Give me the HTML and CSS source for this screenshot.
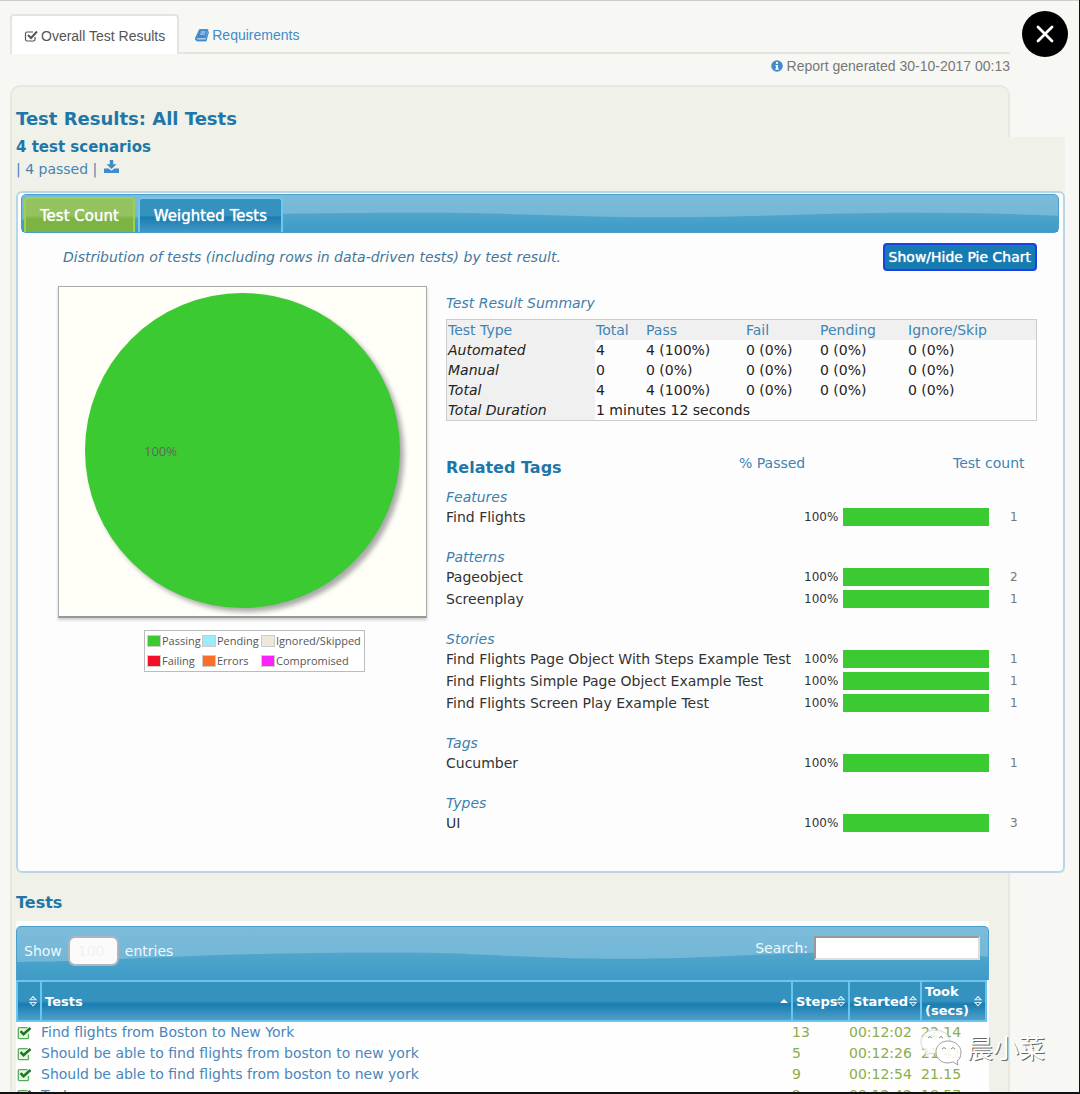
FILE: index.html
```html
<!DOCTYPE html>
<html lang="en">
<head>
<meta charset="utf-8">
<title>Test Results: All Tests</title>
<link rel="stylesheet" href="styles.css">
</head>
<body>
<svg class="sprite" aria-hidden="true">
  <linearGradient id="deep" x1="0" y1="0" x2="0" y2="1"><stop offset="0" stop-color="#53a5cb"/><stop offset=".6" stop-color="#42a0c8"/><stop offset="1" stop-color="#4399c6"/></linearGradient>
  <symbol id="passed" viewBox="0 0 15 15">
    <path d="M11.500 9v3.500q0 1.200-1.200 1.200H2.500q-1.200 0-1.200-1.200V3.800q0-1.200 1.200-1.200h8" fill="#e6f5e4" stroke="#58ab58" stroke-width="1.300"/>
    <path d="M3.500 6.200l3 3L13.500 3" fill="none" stroke="#1d7a20" stroke-width="2.600"/>
  </symbol>
  <symbol id="sort" viewBox="0 0 8 12">
    <path d="M1 4.800L4 1.500l3 3.300zM1 7.500L4 10.800l3-3.300z" fill="none" stroke="#d8effa" stroke-width="1.100"/>
  </symbol>
  <symbol id="wave" viewBox="0 0 1000 50" preserveAspectRatio="none">
    <path d="M0 33C90 33 180 24 390 24c90 0 130 6 230 6 100 0 150-6 240-6q80 0 140 4v22H0z" fill="url(#deep)"/>
  </symbol>
</svg>
<div class="viewer">
  <button class="close" type="button" aria-label="Close">
    <svg viewBox="0 0 18 18" width="18" height="18"><path d="M2 2l14 14M16 2L2 16" stroke="#fff" stroke-width="2.800" stroke-linecap="round"/></svg>
  </button>
  <div class="page">
    <nav class="tabs">
      <a class="tab active" href="#results"><svg viewBox="0 0 14 14" width="14" height="14"><path d="M11 8v2.500q0 1.500-1.500 1.500H3q-1.500 0-1.500-1.500v-6Q1.500 3 3 3h6" fill="none" stroke="#555" stroke-width="1.200"/><path d="M4 6l3 3L13 2.500" fill="none" stroke="#555" stroke-width="2"/></svg>Overall Test Results</a>
      <a class="tab" href="#requirements"><svg viewBox="0 0 14 14" width="14" height="14"><path d="M4.500 1.500h8.500l-2.500 8.500H2q-.8 1.200.4 1.800h8.300L13.600 3.500l-2.500 9.500H2Q0 12.500.5 10z" fill="#428bca" stroke="#428bca" stroke-width=".8"/><path d="M5.800 4h4.700M5.200 6h4.700" stroke="#cfe2f3"/></svg>Requirements</a>
    </nav>
    <p class="generated"><svg viewBox="0 0 12 12" width="12" height="12"><circle cx="6" cy="6" r="5.800" fill="#428bca"/><path d="M5 2h2v1.800H5zM4.500 5H7v3.500h.8v1.300H4.300V8.500H5V6.200h-.5z" fill="#fff"/></svg>Report generated 30-10-2017 00:13</p>

    <main class="content" id="results">
      <h1>Test Results: All Tests</h1>
      <div class="results">
        <h2>4 test scenarios</h2>
        <p class="counts">| 4 passed | <a href="#download" aria-label="Download"><svg viewBox="0 0 15 14" width="15" height="14"><path d="M5.800 0h3.400v4.300h3.300L7.500 9 2.500 4.300h3.300z" fill="#428bca"/><path d="M0 8.500h4.500l3 2.200 3-2.200H15v4.500H0z" fill="#428bca"/></svg></a></p>

        <section class="panel">
          <div class="bar">
            <svg class="wave" aria-hidden="true"><use href="#wave"/></svg>
            <a class="bar-tab on" href="#count">Test Count</a>
            <a class="bar-tab" href="#weighted">Weighted Tests</a>
          </div>
          <div class="intro">
            <p>Distribution of tests (including rows in data-driven tests) by test result.</p>
            <button class="toggle" type="button">Show/Hide Pie Chart</button>
          </div>
          <div class="columns">
            <div class="chart">
              <div class="plot"><div class="pie"><span>100%</span></div></div>
              <ul class="legend">
                <li><i class="key passing"></i>Passing</li><li><i class="key pending"></i>Pending</li><li><i class="key ignored"></i>Ignored/Skipped</li>
                <li><i class="key failing"></i>Failing</li><li><i class="key errors"></i>Errors</li><li><i class="key compromised"></i>Compromised</li>
              </ul>
            </div>
            <div class="details">
              <h4>Test Result Summary</h4>
              <table class="summary">
                <colgroup><col class="c-type"><col class="c-total"><col class="c-pass"><col class="c-fail"><col class="c-pending"><col></colgroup>
                <thead><tr><th>Test Type</th><th>Total</th><th>Pass</th><th>Fail</th><th>Pending</th><th>Ignore/Skip</th></tr></thead>
                <tbody>
                  <tr><th>Automated</th><td>4</td><td>4 (100%)</td><td>0 (0%)</td><td>0 (0%)</td><td>0 (0%)</td></tr>
                  <tr><th>Manual</th><td>0</td><td>0 (0%)</td><td>0 (0%)</td><td>0 (0%)</td><td>0 (0%)</td></tr>
                  <tr><th>Total</th><td>4</td><td>4 (100%)</td><td>0 (0%)</td><td>0 (0%)</td><td>0 (0%)</td></tr>
                  <tr><th>Total Duration</th><td colspan="5">1 minutes 12 seconds</td></tr>
                </tbody>
              </table>
              <div class="tags-head"><h3>Related Tags</h3><span>% Passed</span><span>Test count</span></div>
              <section class="group"><h4>Features</h4>
                <div class="tag"><a href="#t1">Find Flights</a><span class="pct">100%</span><span class="meter"></span><span class="num">1</span></div>
              </section>
              <section class="group"><h4>Patterns</h4>
                <div class="tag"><a href="#t2">Pageobject</a><span class="pct">100%</span><span class="meter"></span><span class="num">2</span></div>
                <div class="tag"><a href="#t3">Screenplay</a><span class="pct">100%</span><span class="meter"></span><span class="num">1</span></div>
              </section>
              <section class="group"><h4>Stories</h4>
                <div class="tag"><a href="#t4">Find Flights Page Object With Steps Example Test</a><span class="pct">100%</span><span class="meter"></span><span class="num">1</span></div>
                <div class="tag"><a href="#t5">Find Flights Simple Page Object Example Test</a><span class="pct">100%</span><span class="meter"></span><span class="num">1</span></div>
                <div class="tag"><a href="#t6">Find Flights Screen Play Example Test</a><span class="pct">100%</span><span class="meter"></span><span class="num">1</span></div>
              </section>
              <section class="group"><h4>Tags</h4>
                <div class="tag"><a href="#t7">Cucumber</a><span class="pct">100%</span><span class="meter"></span><span class="num">1</span></div>
              </section>
              <section class="group"><h4>Types</h4>
                <div class="tag"><a href="#t8">UI</a><span class="pct">100%</span><span class="meter"></span><span class="num">3</span></div>
              </section>
            </div>
          </div>
        </section>
      </div>

      <h3 class="tests-title">Tests</h3>
      <div class="tests">
        <div class="controls">
          <svg class="wave" aria-hidden="true"><use href="#wave"/></svg>
          <label>Show <select><option>100</option></select> entries</label>
          <label class="search">Search: <input type="search"></label>
        </div>
        <table class="list">
          <colgroup><col class="l-icon"><col><col class="l-steps"><col class="l-started"><col class="l-took"></colgroup>
          <thead><tr>
            <th><div class="head end"><svg width="8" height="12"><use href="#sort"/></svg></div></th>
            <th><div class="head">Tests<svg viewBox="0 0 8 12" width="8" height="12"><path d="M0 8l4-4 4 4z" fill="#fff"/></svg></div></th>
            <th><div class="head">Steps<svg width="8" height="12"><use href="#sort"/></svg></div></th>
            <th><div class="head">Started<svg width="8" height="12"><use href="#sort"/></svg></div></th>
            <th><div class="head">Took (secs)<svg width="8" height="12"><use href="#sort"/></svg></div></th>
          </tr></thead>
          <tbody>
            <tr><td><svg width="15" height="15"><use href="#passed"/></svg></td><td><a href="#s1">Find flights from Boston to New York</a></td><td>13</td><td>00:12:02</td><td>22.14</td></tr>
            <tr><td><svg width="15" height="15"><use href="#passed"/></svg></td><td><a href="#s2">Should be able to find flights from boston to new york</a></td><td>5</td><td>00:12:26</td><td>21.41</td></tr>
            <tr><td><svg width="15" height="15"><use href="#passed"/></svg></td><td><a href="#s3">Should be able to find flights from boston to new york</a></td><td>9</td><td>00:12:54</td><td>21.15</td></tr>
            <tr><td><svg width="15" height="15"><use href="#passed"/></svg></td><td><a href="#s4">Test</a></td><td>9</td><td>00:12:42</td><td>18.57</td></tr>
          </tbody>
        </table>
      </div>
    </main>
  </div>
  <div class="watermark">
    <svg viewBox="0 0 44 38" width="44" height="38"><path d="M16 2C8 2 2 7 2 14c0 4 2 7 5 9l-1 5 5-3 6 1C26 26 31 21 31 14S24 2 16 2z" fill="#fff" fill-opacity=".85" stroke="#bbb" stroke-width=".6"/><path d="M29 13c-7 0-12 5-12 11s5 11 12 11l5-1 5 3-1-4c3-2 4-5 4-9 0-6-6-11-13-11z" fill="#fff" fill-opacity=".9" stroke="#888" stroke-width=".8"/><path d="M9 10q2-3 4 0M20 10q2-3 4 0M23 21q2-3 4 0M32 21q2-3 4 0" fill="none" stroke="#888"/></svg>
    <span>晨小菜</span>
  </div>
</div>
</body>
</html>
```
FILE: styles.css
```css
* { box-sizing: border-box; }
body {
  margin: 0;
  font: 14px/20px "DejaVu Sans", Verdana, sans-serif;
  color: #333;
}
h1, h2, h3, h4, p, ul { margin: 0; padding: 0; }
a { color: inherit; text-decoration: none; }
.sprite { position: absolute; width: 0; height: 0; }

.viewer {
  position: relative;
  height: 100vh;
  overflow: hidden;
  background: #f7f8f3;
  border: solid #111;
  border-width: 0 1px 2px 0;
  box-shadow: inset 0 1px #ccc;
}
.close {
  position: absolute;
  top: 11px;
  right: 11px;
  width: 46px;
  height: 46px;
  display: grid;
  place-items: center;
  padding: 0;
  border: 0;
  border-radius: 50%;
  background: #000;
}
.page { padding: 14px 69px 0 10px; }

.tabs { display: flex; height: 40px; border-bottom: 2px solid #e3e5de; }
.tab {
  display: flex;
  align-items: center;
  gap: 3px;
  height: 42px;
  padding: 0 16px;
  font: 14px/20px "Liberation Sans", Arial, sans-serif;
  color: #428bca;
}
.tab.active {
  height: 40px;
  padding: 2px 12px 0 12px;
  color: #555;
  background: #fff;
  border: 2px solid #e3e5de;
  border-bottom: 0;
  border-radius: 4px 4px 0 0;
}
.generated {
  display: flex;
  justify-content: flex-end;
  align-items: center;
  gap: 4px;
  height: 31px;
  padding-bottom: 7px;
  font: 14px/20px "Liberation Sans", Arial, sans-serif;
  color: #777;
}

.content {
  padding: 20px 0 0 4px;
  background: #f0f1e9;
  border: 2px solid #e6e8e1;
  border-radius: 10px;
}
h1 { font-size: 18px; line-height: 24px; padding-bottom: 6px; color: #1f76a8; }
h2 { font-size: 15px; line-height: 20px; color: #1f76a8; }
h3 { font-size: 16px; line-height: 20px; color: #1f76a8; }
h4 { font-size: 14px; line-height: 18px; font-weight: 400; font-style: italic; color: #3f7fab; }
.results { margin-right: -57px; background: #f0f1e9; }
.counts { line-height: 24px; padding-bottom: 10px; color: #4684b5; }
.counts a { margin-left: 2px; }

.panel {
  padding: 1px 4px 27px 3px;
  background: #fdfdfd;
  border: 2px solid #b9d6e9;
  border-radius: 6px;
}
.bar, .controls {
  position: relative;
  display: flex;
  background: linear-gradient(#7cbcda, #6db3d5);
  border: 1px solid #4b9fce;
}
.bar { height: 39px; gap: 3px; padding: 2px 2px 0; border-radius: 5px; align-items: stretch; }
.wave { position: absolute; inset: 0; width: 100%; height: 100%; }
.bar-tab {
  position: relative;
  padding: 0 14px;
  font-size: 15px;
  line-height: 34px;
  color: #fff;
  text-shadow: 0 0 1px #fff;
  border: 2px solid #75c4ec;
  border-bottom: 0;
  border-radius: 4px 4px 0 0;
  background: linear-gradient(#3592bf 0 50%, #1a7cb0 55%, #4199c5);
}
.bar-tab.on { border-color: #9bd052; background: linear-gradient(#93c25f 0 50%, #7cb342 60%); }

.intro { display: flex; justify-content: space-between; align-items: center; padding: 10px 22px 0 42px; }
.intro p { font-style: italic; color: #44789c; }
.toggle {
  height: 28px;
  padding: 0 4px;
  font: 14px/20px "DejaVu Sans", Verdana, sans-serif;
  color: #fff;
  text-shadow: 0 0 1px #fff;
  background: #167bb0;
  border: 2px solid #1c40e8;
  border-radius: 4px;
}

.columns { display: flex; gap: 19px; padding: 15px 22px 0 37px; }
.chart { flex: none; width: 369px; }
.plot {
  padding: 6px 0 8px 26px;
  background: #fffef7;
  border: 1px solid #aaa;
  border-bottom: 2px solid #999;
  box-shadow: 0 2px 3px #ccc;
}
.pie {
  width: 315px;
  height: 315px;
  display: flex;
  align-items: center;
  padding-left: 59px;
  border-radius: 50%;
  background: #3cca33;
  box-shadow: 4px 4px 5px #aaa;
}
.pie span { font: 13px/20px "Open Sans", sans-serif; color: #666; }
.legend {
  display: grid;
  grid-template-columns: 55px 59px auto;
  width: 221px;
  margin: 12px auto 0 86px;
  padding: 0 2px;
  list-style: none;
  font: 11px/20px "Open Sans", sans-serif;
  color: #555;
  border: 1px solid #bbb;
  background: #fff;
}
.legend li { display: flex; align-items: center; white-space: nowrap; }
.key { width: 14px; height: 12px; margin-right: 1px; border: 1px solid #ccc; }
.passing { background: #3cca33; }
.pending { background: #9becfa; }
.ignored { background: #eee8dc; }
.failing { background: #f5102a; }
.errors { background: #fa6e28; }
.compromised { background: #fb22fb; }

.details { flex: 1; min-width: 0; padding-top: 8px; }
.summary {
  width: 100%;
  margin-top: 7px;
  table-layout: fixed;
  border-collapse: separate;
  border-spacing: 0;
  border: 1px solid #ccc;
}
.summary th, .summary td { height: 20px; padding: 0 1px; text-align: left; font-weight: 400; white-space: nowrap; color: #222; }
.summary thead th { color: #3f84b4; background: #f0f0f0; }
.summary tbody th { font-style: italic; background: #f0f0f0; }
.c-type { width: 148px; }
.c-total { width: 50px; }
.c-pass { width: 100px; }
.c-fail { width: 74px; }
.c-pending { width: 88px; }

.tags-head {
  display: grid;
  grid-template-columns: 1fr 214px 84px;
  align-items: start;
  padding-top: 32px;
  color: #3f84b4;
}
.tags-head h3 { padding-top: 5px; }
.group { padding: 10px 0; }
.tag { display: grid; grid-template-columns: 1fr 39px 146px 48px; align-items: center; height: 22px; }
.tag a { white-space: nowrap; }
.pct { font-size: 12px; }
.meter { height: 18px; background: #3cca33; }
.num { padding-left: 21px; font-size: 12px; color: #777; }

.tests-title { padding: 20px 0 8px; }
.tests { margin-right: 19px; padding-top: 5px; background: #fefefe; }
.controls {
  height: 54px;
  justify-content: space-between;
  align-items: flex-start;
  padding: 9px 8px 0 7px;
  border-bottom: 0;
  border-radius: 5px 5px 0 0;
  color: #eef8fd;
}
.controls label { position: relative; display: flex; align-items: center; gap: 6px; }
.controls select {
  width: 51px;
  height: 30px;
  padding: 0 8px;
  appearance: none;
  font: inherit;
  color: #f0f2f4;
  background: #fbfbfb;
  border: 2px solid #b0b4be;
  border-radius: 7px;
}
.controls input { width: 166px; height: 24px; border: 2px solid; border-color: #999 #ddd #ddd #999; background: #fff; }

.list { width: calc(100% - 2px); table-layout: fixed; border-collapse: collapse; color: #8bad4a; }
.l-icon { width: 24px; }
.l-steps { width: 57px; }
.l-started { width: 72px; }
.l-took { width: 65px; }
.list th {
  height: 40px;
  padding: 0 3px;
  font-size: 13px;
  line-height: 19px;
  text-align: left;
  color: #fff;
  border: 2px solid #68c5ef;
  background: linear-gradient(#3592bf 0 50%, #1a7cb0 58%, #4f9fc9);
}
.list td { height: 21px; padding: 0; line-height: 21px; white-space: nowrap; }
.list td svg { display: block; }
.list td a { color: #4a86ba; }
.head { display: flex; justify-content: space-between; align-items: center; }
.head.end { justify-content: flex-end; }
.head svg { flex: none; }

.watermark {
  position: absolute;
  right: 34px;
  bottom: 25px;
  display: flex;
  align-items: center;
  gap: 4px;
  font: 26px/40px "Noto Sans CJK SC", sans-serif;
  color: #fff;
  text-shadow: 1px 1px 0 #666;
}
```
